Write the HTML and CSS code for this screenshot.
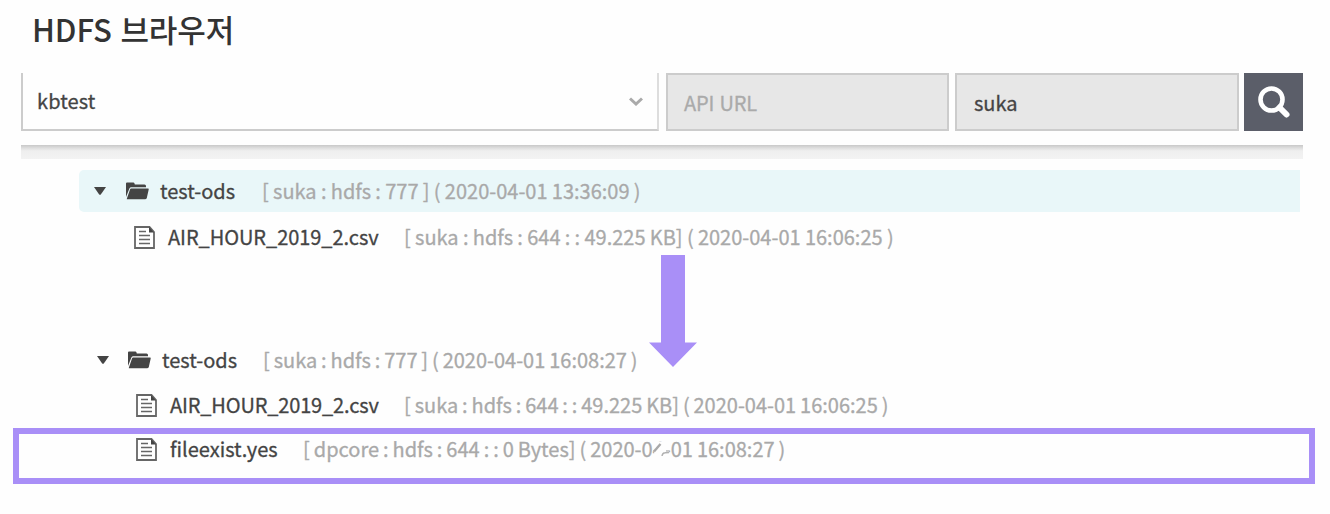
FILE: index.html
```html
<!DOCTYPE html>
<html lang="ko">
<head>
<meta charset="utf-8">
<title>HDFS 브라우저</title>
<link rel="stylesheet" href="styles.css">
</head>
<body>
<svg width="0" height="0" class="defs">
  <symbol id="caret" viewBox="0 0 12 8"><path d="M0 0H12L6.8 7.4Q6 8.2 5.2 7.4Z" fill="#444"/></symbol>
  <symbol id="folder" viewBox="0 0 23 18"><path d="M0 15V1.5Q0 .5 1 .5H7.5Q8.5 .5 8.8 2.5H18.5Q20 2.5 20 4V5.2H5.2Q4 5.2 3.4 6.5Z" fill="#444"/><path d="M5.2 6.5H22Q23 6.5 22.7 7.5L20.8 16Q20.4 17.3 19 17.3H1.2Q.6 17.3 .9 16.4L4 7.5Q4.3 6.5 5.2 6.5Z" fill="#444"/></symbol>
  <symbol id="file" viewBox="0 0 21 23"><path d="M1 1H15.5L20 6V22H1Z" fill="#fff" stroke="#666" stroke-width="1.8"/><path d="M15 1V6.5H20Z" fill="#444"/><path d="M5 5.5H12M5 9.5H16M5 13.5H16M5 17.5H16" stroke="#666" stroke-width="1.5"/></symbol>
</svg>
<h1 class="title">HDFS 브라우저</h1>
<form class="filters">
  <div class="field select"><span>kbtest</span><svg class="chevron" viewBox="0 0 14 9"><path d="M1 1.5L7 7L13 1.5" fill="none" stroke="#aaa" stroke-width="3"/></svg></div>
  <div class="field api"><span>API URL</span></div>
  <div class="field user"><span>suka</span></div>
  <div class="search"><svg class="lens" viewBox="0 0 34 34"><circle cx="14.5" cy="14.5" r="11" fill="none" stroke="#fff" stroke-width="4.6"/><path d="M22.5 22.5L29.5 29.5" stroke="#fff" stroke-width="6" stroke-linecap="round"/></svg></div>
</form>
<div class="divider"></div>
<main class="trees" lang="en">
  <section class="tree before">
    <div class="row folder selected"><svg class="caret"><use href="#caret"/></svg><svg class="dir"><use href="#folder"/></svg><span class="name n1">test-ods</span><span class="meta m1">[ suka : hdfs : 777 ] ( 2020-04-01 13:36:09 )</span></div>
    <div class="row file"><svg class="doc"><use href="#file"/></svg><span class="name n2">AIR_HOUR_2019_2.csv</span><span class="meta m2">[ suka : hdfs : 644 : : 49.225 KB] ( 2020-04-01 16:06:25 )</span></div>
  </section>
  <svg class="arrow" viewBox="0 0 48 112"><path d="M12 0H36V87.5H48L24 112L0 87.5H12Z" fill="#a98ff7"/></svg>
  <section class="tree after">
    <div class="row folder"><svg class="caret"><use href="#caret"/></svg><svg class="dir"><use href="#folder"/></svg><span class="name n3">test-ods</span><span class="meta m3">[ suka : hdfs : 777 ] ( 2020-04-01 16:08:27 )</span></div>
    <div class="row file"><svg class="doc"><use href="#file"/></svg><span class="name n4">AIR_HOUR_2019_2.csv</span><span class="meta m4">[ suka : hdfs : 644 : : 49.225 KB] ( 2020-04-01 16:06:25 )</span></div>
    <div class="row file added"><svg class="doc"><use href="#file"/></svg><span class="name n5">fileexist.yes</span><span class="meta m5">[ dpcore : hdfs : 644 : : 0 Bytes] ( 2020-04-01 16:08:27 )</span><svg class="smudge" viewBox="0 0 16 18"><path d="M1.2 0H13V9.5H16V18H1.2Z" fill="#fefefe"/><path d="M1 9.5L7.5 2" stroke="#a9a9a9" stroke-width="2.4"/><path d="M9 14Q9.5 10.8 12 10.8L16 10.5" fill="none" stroke="#b0b0b0" stroke-width="1.4"/></svg></div>
  </section>
</main>
</body>
</html>
```
FILE: styles.css
```css
* { box-sizing: border-box; }
body {
  margin: 0;
  width: 1330px;
  height: 514px;
  overflow: hidden;
  background: #fefefe;
  color: #444;
  font-family: "Noto Sans CJK KR", "Noto Sans", sans-serif;
  font-size: 20px;
  -webkit-text-stroke: .3px;
}
.defs { display: block; }
.title {
  margin: 0;
  height: 73px;
  padding: 8px 0 0 32px;
  color: #333;
  font-size: 31px;
  font-weight: 500;
  letter-spacing: -.1px;
  line-height: 42px;
  white-space: nowrap;
  -webkit-text-stroke: 0;
}
.filters { display: flex; height: 58px; margin: 0 27px 0 21px; }
.field {
  display: flex;
  align-items: center;
  padding-left: 16px;
  border: 2px solid #ccc;
  background: #e7e7e7;
  white-space: nowrap;
}
.field span { line-height: 30px; }
.select {
  width: 638px;
  margin-right: 7px;
  padding: 0 14px 0 14px;
  justify-content: space-between;
  border-top: 0;
  border-right-color: #ddd;
  background: #fefefe;
  letter-spacing: .1px;
}
.chevron { width: 14px; height: 9px; }
.api { width: 283px; margin-right: 6px; padding-top: 2px; color: #aaa; letter-spacing: -.2px; }
.user { width: 284px; margin-right: 5px; padding: 2px 0 0 17px; }
.search {
  display: flex;
  flex: 1;
  align-items: center;
  justify-content: center;
  background: #5b5e69;
}
.lens { width: 34px; height: 34px; }
.divider {
  height: 14px;
  margin: 14px 27px 0 21px;
  background: linear-gradient(#c8c8c8, #dedede 3px, #efefef 6px, #f3f3f3);
}
.trees { position: relative; font-family: "Noto Sans CJK JP", "Noto Sans", sans-serif; }
.tree { padding-left: 79px; }
.before { padding-top: 11px; }
.after { padding-top: 81px; }
.row {
  position: relative;
  display: flex;
  align-items: center;
  width: 1221px;
  height: 42px;
  white-space: nowrap;
}
.before .file { margin-top: 4px; }
.after .file { margin-top: 3px; }
.after .added { margin-top: 2px; }
.selected { border-radius: 5px 0 0 5px; background: #e9f7f9; }
.folder { padding-left: 15px; }
.file { padding-left: 55px; }
.after .folder { padding-left: 18px; }
.after .file { padding-left: 57px; }
.caret { width: 12px; height: 8px; margin-right: 19px; }
.selected .caret { margin-right: 20px; }
.dir { width: 23px; height: 18px; margin-right: 11px; }
.doc { width: 21px; height: 23px; margin-right: 13px; }
.name, .meta { padding-bottom: 2px; }
.name { width: 101px; color: #444; }
.n1 { width: 102px; }
.n2 { width: 236px; letter-spacing: -.05px; }
.n4 { width: 234px; letter-spacing: -.15px; }
.n5 { width: 133px; }
.meta { color: #a9a9a9; }
.m1 { word-spacing: -.2px; }
.m2 { word-spacing: -.2px; }
.m3 { word-spacing: -.6px; }
.m4 { word-spacing: -.6px; }
.m5 { word-spacing: -.5px; }
.arrow {
  position: absolute;
  left: 649px;
  top: 96px;
  width: 48px;
  height: 112px;
}
.added::before {
  content: "";
  position: absolute;
  left: -66px;
  top: 0;
  box-sizing: border-box;
  width: 1302px;
  height: 56px;
  border: 6px solid #a98ff7;
}
.smudge { position: absolute; left: 574px; top: 14px; width: 16px; height: 18px; }
```
